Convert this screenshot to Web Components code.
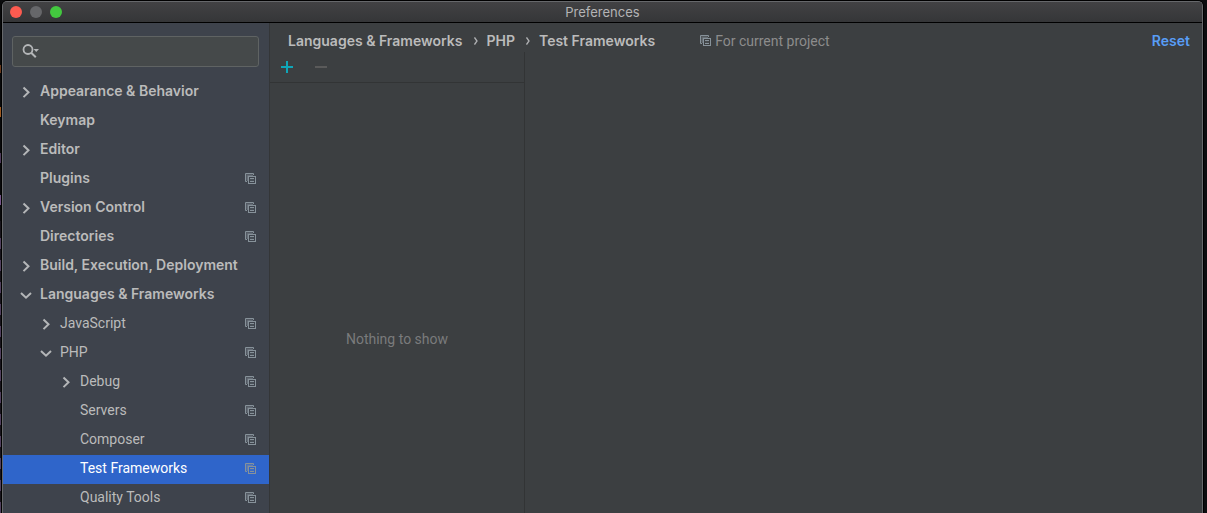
<!DOCTYPE html>
<html lang="en">
<head>
<meta charset="utf-8">
<title>Preferences</title>
<style>
html, body { height: 100%; }
body { margin: 0; background: #0c0d0f; overflow: hidden; font-family: Inter, "Liberation Sans", sans-serif; font-size: 14px; line-height: 20px; color: #bbbbbb; --plain: Roboto, "Liberation Sans", sans-serif; }
</style>
</head>
<body>
<desktop-backdrop>
  <prefs-window heading="Preferences">
    <prefs-sidebar slot="sidebar">
      <tree-row level="1" state="closed">Appearance &amp; Behavior</tree-row>
      <tree-row level="1">Keymap</tree-row>
      <tree-row level="1" state="closed">Editor</tree-row>
      <tree-row level="1" project>Plugins</tree-row>
      <tree-row level="1" state="closed" project>Version Control</tree-row>
      <tree-row level="1" project>Directories</tree-row>
      <tree-row level="1" state="closed">Build, Execution, Deployment</tree-row>
      <tree-row level="1" state="open">Languages &amp; Frameworks</tree-row>
      <tree-row level="2" state="closed" project>JavaScript</tree-row>
      <tree-row level="2" state="open" project>PHP</tree-row>
      <tree-row level="3" state="closed" project>Debug</tree-row>
      <tree-row level="3" project>Servers</tree-row>
      <tree-row level="3" project>Composer</tree-row>
      <tree-row level="3" project selected>Test Frameworks</tree-row>
      <tree-row level="3" project>Quality Tools</tree-row>
    </prefs-sidebar>
    <page-header>
      <crumb-item>Languages &amp; Frameworks</crumb-item>
      <crumb-item>PHP</crumb-item>
      <crumb-item last>Test Frameworks</crumb-item>
      <span slot="scope">For current project</span>
      <span slot="action">Reset</span>
    </page-header>
    <list-panel>Nothing to show</list-panel>
  </prefs-window>
</desktop-backdrop>

<script>
function define(name, html, setup) {
  const template = document.createElement('template');
  template.innerHTML = html;
  customElements.define(name, class extends HTMLElement {
    constructor() {
      super();
      this.attachShadow({ mode: 'open' }).append(template.content.cloneNode(true));
    }
    connectedCallback() {
      if (setup) setup(this, this.shadowRoot);
    }
  });
}

define('project-icon', `
<style>:host { display: block; flex: none; width: 12px; height: 12px; color: #87929a; } svg { display: block; }</style>
<svg width="12" height="12" viewBox="0 0 12 12" fill="none" stroke="currentColor" aria-hidden="true">
  <path d="M2 8.500H.5V.5h8V2"/>
  <path d="M1.500 7.500v-6h6" opacity=".3"/>
  <path d="M2.500 8V2.500H8" opacity=".55"/>
  <rect x="3.500" y="3.500" width="7" height="7"/>
  <path d="M5 5.500h4M5 8.500h4"/><path d="M5 7h4" opacity=".3"/>
</svg>`);

define('desktop-backdrop', `
<style>
:host { display: flex; box-sizing: border-box; height: 100vh; padding: 1px 4px 0 0; background: #0c0d0f; }
.edge { flex: none; width: 1px; margin-right: 1px;
  background:
    linear-gradient(#6b3a1c, #6b3a1c) 0 64px / 1px 8px no-repeat,
    linear-gradient(#a05a20, #a05a20) 0 106px / 1px 10px no-repeat,
    linear-gradient(#4f3b5c, #4f3b5c) 0 152px / 1px 10px no-repeat,
    linear-gradient(#76558a, #76558a) 0 194px / 1px 10px no-repeat,
    repeating-linear-gradient(#17141b 0 17px, #51405f 17px 28px, #17141b 28px 22px) 0 220px / 1px 22px no-repeat,
    repeating-linear-gradient(#51405f 0 11px, #17141b 11px 22px) 0 237px / 1px 100% no-repeat,
    #08090a; }
::slotted(prefs-window) { flex: 1; min-width: 0; }
</style>
<div class="edge"></div><slot></slot>`);

define('window-light', `
<style>:host { display: block; width: 12px; height: 12px; border-radius: 50%; background: var(--light, #66676a); }</style>`);

define('prefs-window', `
<style>
:host { display: flex; flex-direction: column; box-sizing: border-box; border: 1px solid #66686b; border-bottom: 0; border-radius: 5px 5px 0 0; overflow: hidden; background: #3c3f41; box-shadow: 0 0 0 1px #000; }
header { display: grid; grid-template-columns: 1fr auto 1fr; align-items: center; height: 20px; border-bottom: 1px solid #000; background: linear-gradient(#424244, #353638); }
.lights { display: flex; gap: 8px; padding-left: 7px; }
h1 { margin: 0; font-size: 13px; line-height: 20px; font-weight: 400; color: #b4b4b5; }
.body { flex: 1; min-height: 0; display: flex; }
main { flex: 1; min-width: 0; display: flex; flex-direction: column; }
::slotted(list-panel) { flex: 1; }
</style>
<header>
  <div class="lights"><window-light style="--light:#fc5b50"></window-light><window-light></window-light><window-light style="--light:#43c83f"></window-light></div>
  <h1></h1>
</header>
<div class="body"><slot name="sidebar"></slot><main><slot></slot></main></div>`,
(el, root) => { root.querySelector('h1').textContent = el.getAttribute('heading'); });

define('search-field', `
<style>
:host { display: block; }
label { display: flex; align-items: center; gap: 6px; box-sizing: border-box; height: 31px; padding: 0 9px 1px; border: 1px solid #5f6363; border-radius: 3px; background: #45494a; }
svg { flex: none; display: block; }
input { flex: 1; min-width: 0; border: 0; padding: 0; outline: 0; background: none; color: #bbb; font: inherit; }
</style>
<label><svg width="18" height="16" viewBox="0 0 18 16" aria-hidden="true">
  <circle cx="6" cy="6.500" r="4.500" fill="none" stroke="#b4b6b8" stroke-width="1.800"/>
  <path d="M9.200 9.700l4.600 4.600" stroke="#b4b6b8" stroke-width="2"/>
  <path d="M11.500 6h5.500l-2.750 3z" fill="#b4b6b8"/>
</svg><input type="text" aria-label="Search settings"></label>`);

define('prefs-sidebar', `
<style>
:host { display: flex; flex-direction: column; flex: none; box-sizing: border-box; width: 267px; background: #3e434c; border-right: 1px solid #343638; overflow: hidden; }
search-field { margin: 13px 10px 11px 9px; }
nav { display: flex; flex-direction: column; }
</style>
<search-field></search-field>
<nav aria-label="Settings"><slot></slot></nav>`);

define('tree-row', `
<style>
:host { display: block; }
a { display: flex; align-items: center; box-sizing: border-box; height: 29px; padding: 0 12px 2px 16px; color: #bbbbbb; text-decoration: none; font-weight: 600; white-space: nowrap; }
:host([level="2"]) a, :host([level="3"]) a { font-family: var(--plain); font-weight: 400; }
:host([level="2"]) a { padding-left: 36px; }
:host([level="3"]) a { padding-left: 56px; }
:host([selected]) a { background: #2f65ca; color: #fff; }
svg { flex: none; width: 14px; height: 14px; margin-right: 7px; fill: none; stroke: #b4b6b8; stroke-width: 2; }
span { flex: 1; padding-bottom: 2px; }
</style>
<a href="#"><svg viewBox="0 0 14 14" aria-hidden="true"><path/></svg><span><slot></slot></span></a>`,
(el, root) => {
  const shapes = { closed: 'M4.500 2.500l5 4.800l-5 4.800', open: 'M2 5l5 4.700l5-4.700' };
  root.querySelector('path').setAttribute('d', shapes[el.getAttribute('state')] || '');
  if (el.hasAttribute('selected')) root.querySelector('a').setAttribute('aria-current', 'page');
  if (el.hasAttribute('project')) root.querySelector('a').append(document.createElement('project-icon'));
});

define('crumb-item', `
<style>
:host { display: flex; align-items: center; font-weight: 600; white-space: nowrap; }
svg { display: block; width: 4px; height: 8px; margin: 0 9px 0 11px; fill: none; stroke: #afb1b3; stroke-width: 1.300; }
:host([last]) svg { display: none; }
</style>
<slot></slot><svg viewBox="0 0 4 8" aria-hidden="true"><path d="M.5 .5L3 4L.5 7.500"/></svg>`);

define('page-header', `
<style>
:host { display: flex; align-items: center; height: 29px; padding: 7px 12px 0 18px; box-sizing: border-box; }
nav { display: flex; }
.scope { display: flex; align-items: center; gap: 3px; margin-left: 45px; flex: 1; color: #8c8c8c; font-family: var(--plain); white-space: nowrap; }
button { border: 0; padding: 0; background: none; font: inherit; font-weight: 600; color: #589df6; }
</style>
<nav aria-label="Breadcrumb"><slot></slot></nav>
<div class="scope"><project-icon></project-icon><slot name="scope"></slot></div>
<button type="button"><slot name="action"></slot></button>`);

define('list-panel', `
<style>
:host { display: flex; min-height: 0; }
.list { display: flex; flex-direction: column; flex: none; box-sizing: border-box; width: 255px; border-right: 1px solid #323435; }
.tools { display: flex; align-items: center; gap: 20px; height: 30px; padding: 0 10px; border-bottom: 1px solid #323435; }
button { display: block; border: 0; padding: 0; background: none; height: 14px; }
svg { display: block; }
.empty { flex: 1; display: flex; align-items: center; justify-content: center; color: #7a7b7c; font-family: var(--plain); padding-top: 82px; }
</style>
<section class="list">
  <div class="tools">
    <button type="button" aria-label="Add"><svg width="14" height="14"><path d="M7 1v12M1 7h12" stroke="#0fa6b8" stroke-width="2"/></svg></button>
    <button type="button" aria-label="Remove" disabled><svg width="14" height="14"><path d="M1 7h12" stroke="#5a5a5a" stroke-width="2"/></svg></button>
  </div>
  <div class="empty"><slot></slot></div>
</section>`);
</script>
</body>
</html>
